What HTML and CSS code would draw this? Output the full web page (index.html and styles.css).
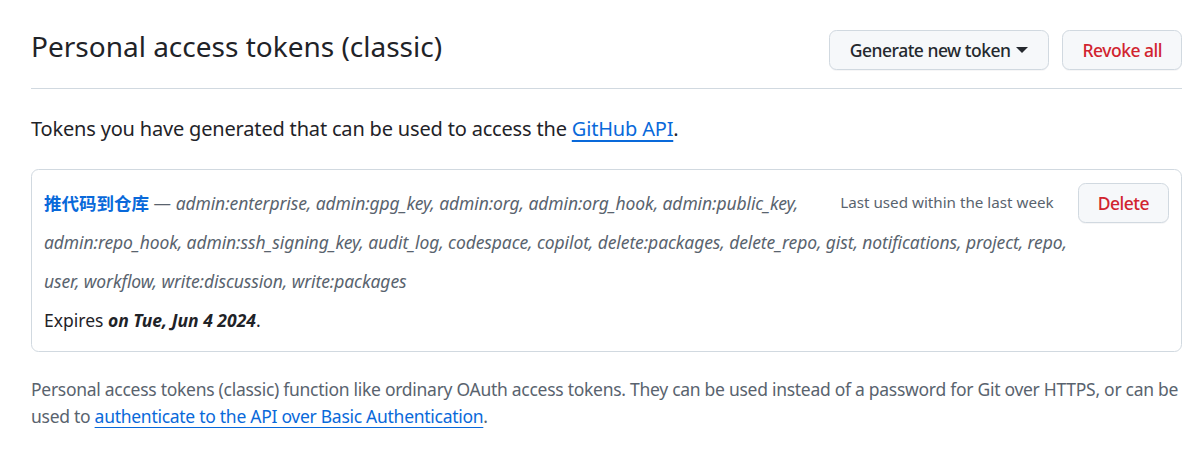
FILE: index.html
```html
<!DOCTYPE html>
<html lang="en">
<head>
<meta charset="utf-8">
<title>Personal access tokens (classic)</title>
<link rel="stylesheet" href="styles.css">
</head>
<body>
<div class="page">
  <div class="subhead">
    <h2 class="subhead-title">Personal access tokens (classic)</h2>
    <div class="subhead-actions">
      <button class="btn" type="button">Generate new token <span class="caret"></span></button>
      <button class="btn btn-danger btn-revoke" type="button">Revoke all</button>
    </div>
  </div>
  <p class="intro">Tokens you have generated that can be used to access the <a class="link" href="#">GitHub API</a>.</p>
  <div class="token-box">
    <div class="token-side">
      <span class="last-used">Last used within the last week</span>
      <button class="btn btn-danger btn-delete" type="button">Delete</button>
    </div>
    <div class="token-desc"><a class="token-name" href="#">推代码到仓库</a> <span class="dash">—</span> <em class="scopes">admin:enterprise, admin:gpg_key, admin:org, admin:org_hook, admin:public_key,<br>admin:repo_hook, admin:ssh_signing_key, audit_log, codespace, copilot, delete:packages, delete_repo, gist, notifications, project, repo,<br>user, workflow, write:discussion, write:packages</em></div>
    <div class="token-expiry">Expires <strong class="expiry-date">on Tue, Jun 4 2024</strong>.</div>
  </div>
  <p class="note">Personal access tokens (classic) function like ordinary OAuth access tokens. They can be used instead of a password for Git over HTTPS, or can be used to <a class="link" href="#">authenticate to the API over Basic Authentication</a>.</p>
</div>
</body>
</html>
```

FILE: styles.css
```css
* { box-sizing: border-box; }
body {
  margin: 0;
  background: #ffffff;
  color: #1f2328;
  font-family: "Noto Sans", sans-serif;
}
.page {
  padding: 0 7px 0 31px;
}
.subhead {
  display: flex;
  align-items: center;
  justify-content: space-between;
  padding: 30px 0 18px;
  border-bottom: 1px solid #d1d9e0;
}
.subhead-title {
  margin: 0 0 8px;
  font-size: 28px;
  font-weight: 400;
  line-height: 30px;
}
.subhead-actions {
  display: flex;
  gap: 13px;
}
.btn {
  display: inline-flex;
  align-items: center;
  height: 40px;
  padding: 0 20px;
  font-family: inherit;
  font-size: 17.5px;
  font-weight: 500;
  letter-spacing: -0.5px;
  color: #25292e;
  background: #f6f8fa;
  border: 1px solid #d1d9e0;
  border-radius: 7.5px;
  box-shadow: 0 1px 0 rgba(31, 35, 40, 0.04);
}
.btn-danger { color: #d1242f; }
.btn-revoke { padding: 0 19px; }
.caret {
  display: inline-block;
  margin-left: 6px;
  width: 0;
  height: 0;
  border-left: 6px solid transparent;
  border-right: 6px solid transparent;
  border-top: 6px solid #25292e;
}
.intro {
  margin: 25px 0;
  font-size: 20px;
  line-height: 30px;
  letter-spacing: -0.18px;
}
.link {
  color: #0969da;
  text-decoration: underline;
  text-underline-offset: 4px;
}
.token-box {
  border: 1px solid #d1d9e0;
  border-radius: 7.5px;
  padding: 13px 12px 11px 12px;
  font-size: 17.5px;
  line-height: 39px;
}
.token-side {
  float: right;
  display: flex;
  align-items: flex-start;
  gap: 24px;
  height: 39px;
}
.last-used {
  color: #59636e;
  font-size: 15.2px;
  line-height: 39px;
}
.btn-delete {
  padding: 0 19px;
}
.token-name {
  color: #0969da;
  font-weight: 700;
  text-decoration: none;
  font-family: "Noto Sans CJK SC", sans-serif;
}
.dash { color: #59636e; }
.scopes {
  color: #59636e;
  letter-spacing: -0.1px;
}
.expiry-date {
  font-style: italic;
  font-weight: 700;
}
.note {
  margin: 24px 0 0;
  color: #59636e;
  font-size: 17.5px;
  line-height: 27px;
  letter-spacing: -0.28px;
}
```
